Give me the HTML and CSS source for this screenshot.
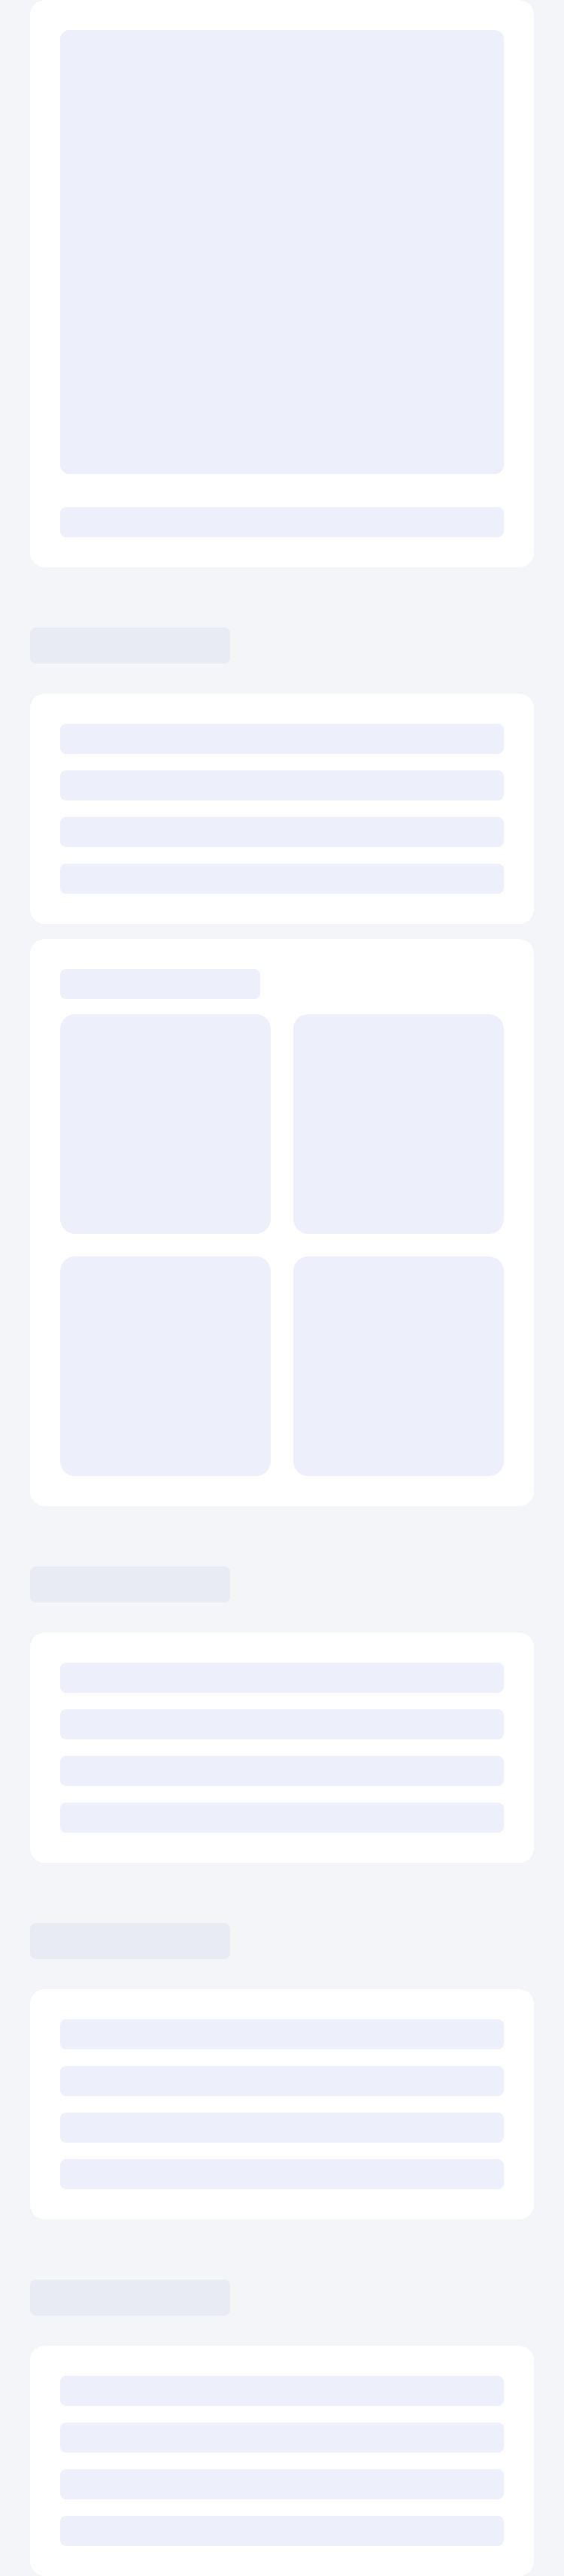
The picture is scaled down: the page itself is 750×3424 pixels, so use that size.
FILE: index.html
```html
<!DOCTYPE html>
<html lang="en">
<head>
<meta charset="utf-8">
<title>Loading</title>
<link rel="stylesheet" href="styles.css">
</head>
<body>
<main class="page">
  <section class="card hero">
    <div class="sk sk-image"></div>
    <div class="sk sk-line"></div>
  </section>

  <div class="sk sk-title"></div>
  <section class="card list">
    <div class="sk sk-line"></div>
    <div class="sk sk-line"></div>
    <div class="sk sk-line"></div>
    <div class="sk sk-line"></div>
  </section>

  <section class="card gallery">
    <div class="sk sk-subtitle"></div>
    <div class="grid">
      <div class="sk sk-tile"></div>
      <div class="sk sk-tile"></div>
      <div class="sk sk-tile"></div>
      <div class="sk sk-tile"></div>
    </div>
  </section>

  <div class="sk sk-title"></div>
  <section class="card list">
    <div class="sk sk-line"></div>
    <div class="sk sk-line"></div>
    <div class="sk sk-line"></div>
    <div class="sk sk-line"></div>
  </section>

  <div class="sk sk-title"></div>
  <section class="card list">
    <div class="sk sk-line"></div>
    <div class="sk sk-line"></div>
    <div class="sk sk-line"></div>
    <div class="sk sk-line"></div>
  </section>

  <div class="sk sk-title"></div>
  <section class="card list">
    <div class="sk sk-line"></div>
    <div class="sk sk-line"></div>
    <div class="sk sk-line"></div>
    <div class="sk sk-line"></div>
  </section>
</main>
</body>
</html>
```

FILE: styles.css
```css
html, body {
  margin: 0;
  padding: 0;
  background: #f4f5f9;
  font-family: "Liberation Sans", Arial, sans-serif;
}

.page {
  display: flex;
  flex-direction: column;
  padding: 0 40px 40px;
}

.card {
  background: #ffffff;
  border-radius: 20px;
  padding: 40px;
  display: flex;
  flex-direction: column;
}

.sk {
  background: #edf0fa;
}

.hero {
  gap: 44px;
}

.sk-image {
  height: 590px;
  border-radius: 12px;
}

.sk-line {
  height: 40px;
  border-radius: 8px;
}

.list {
  gap: 22px;
}

.sk-title {
  width: 266px;
  height: 48px;
  border-radius: 8px;
  background: #e8ebf4;
  margin: 80px 0 40px;
}

.gallery {
  margin-top: 20px;
  gap: 20px;
}

.sk-subtitle {
  width: 266px;
  height: 40px;
  border-radius: 8px;
}

.grid {
  display: grid;
  grid-template-columns: 1fr 1fr;
  gap: 30px;
}

.sk-tile {
  height: 292px;
  border-radius: 20px;
}
```
